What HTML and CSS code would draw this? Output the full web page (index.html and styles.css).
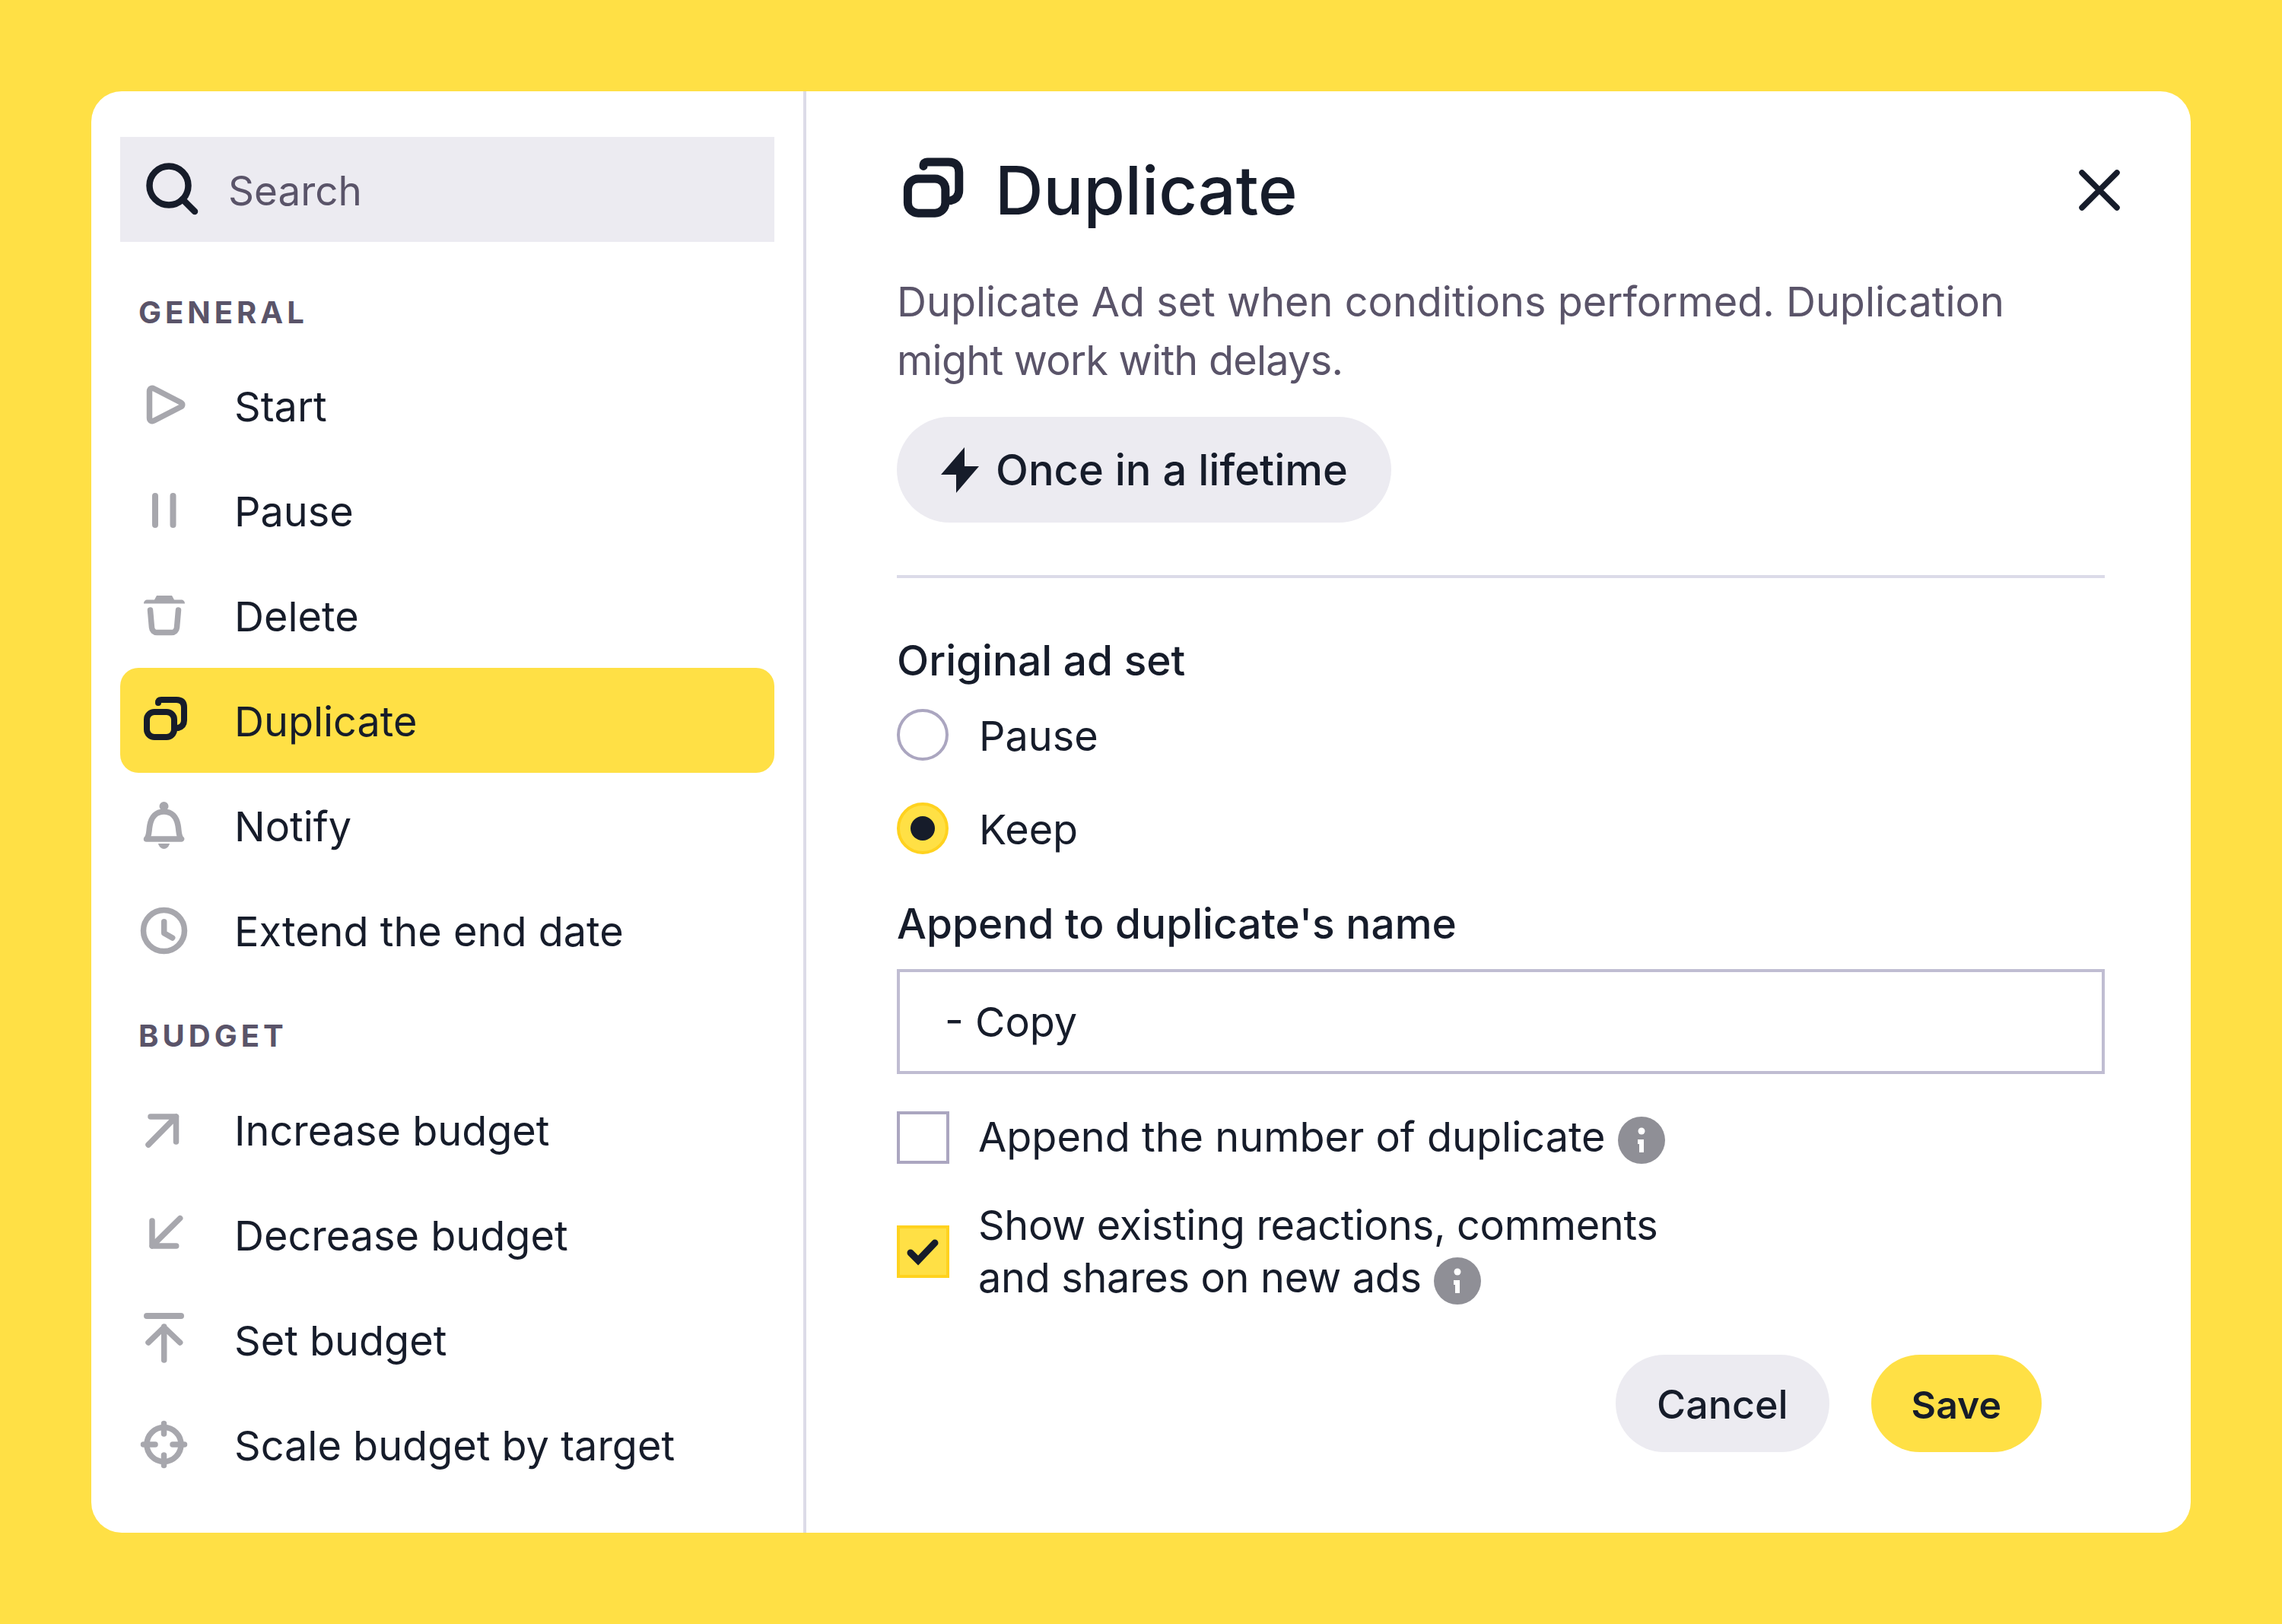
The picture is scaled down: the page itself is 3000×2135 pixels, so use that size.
FILE: index.html
```html
<!DOCTYPE html>
<html lang="en">

<head>
    <meta charset="UTF-8">
    <title>Duplicate</title>
    <link rel="stylesheet" href="styles.css">
</head>

<body>
<div class="card">
    <div class="side">
        <div class="search">
            <svg class="ico-search" viewBox="0 0 80 80"><circle cx="38" cy="35" r="25.5"/><path d="M56 53L72 69"/></svg>
            <span class="txt">Search</span>
        </div>

        <div class="group-title">GENERAL</div>
        <div class="row">
            <svg class="ico" viewBox="0 0 64 64"><path d="M12.5 13.5c0-3.5 3-5 6-3.5l35 18c3 1.5 3 4.5 0 6l-35 18c-3 1.5-6 0-6-3.5z"/></svg>
            <span class="txt">Start</span>
        </div>
        <div class="row">
            <svg class="ico" viewBox="0 0 64 64"><path class="wide" d="M20 13V51M43.5 13V51"/></svg>
            <span class="txt">Pause</span>
        </div>
        <div class="row">
            <svg class="ico" viewBox="0 0 64 64"><path class="solid" d="M5 16.5c0-3 2-5 5-5h9l3-5.5h20l3 5.5h9c3 0 5 2 5 5z"/><path d="M13.5 25l2 23c.4 4 3 6.5 7 6.5h19c4 0 6.6-2.5 7-6.5l2-23"/></svg>
            <span class="txt">Delete</span>
        </div>
        <div class="row active">
            <svg class="ico" viewBox="0 0 64 64"><rect class="wide" x="9" y="21" width="36" height="33" rx="10"/><path class="wide" d="M24 9q0-4 4-4h20q10 0 10 10v17q0 8-8 10"/></svg>
            <span class="txt">Duplicate</span>
        </div>
        <div class="row">
            <svg class="ico" viewBox="0 0 64 64"><circle class="solid" cx="31.5" cy="7" r="6"/><path d="M8.500 50c4-4 3-10 4.500-18c2-11 8-18 18.500-18s16.500 7 18.500 18c1.500 8 .5 14 4.500 18z"/><path class="solid" d="M24 56h15c-1 4-4 7-7.500 7s-6.500-3-7.500-7z"/></svg>
            <span class="txt">Notify</span>
        </div>
        <div class="row">
            <svg class="ico" viewBox="0 0 64 64"><circle cx="31.5" cy="32.5" r="27"/><path d="M31.700 20.700V35.700L42.700 42"/></svg>
            <span class="txt">Extend the end date</span>
        </div>

        <div class="group-title second">BUDGET</div>
        <div class="row">
            <svg class="ico" viewBox="0 0 64 64"><path d="M11 52L47.500 15M14 15H47.500V48"/></svg>
            <span class="txt">Increase budget</span>
        </div>
        <div class="row">
            <svg class="ico" viewBox="0 0 64 64"><path d="M52.700 10.700L16 47M16 14V47H47.700"/></svg>
            <span class="txt">Decrease budget</span>
        </div>
        <div class="row">
            <svg class="ico" viewBox="0 0 64 64"><path class="wide" d="M9 1H54"/><path d="M31.700 59V15M11 36L31.700 16L52.700 36"/></svg>
            <span class="txt">Set budget</span>
        </div>
        <div class="row">
            <svg class="ico" viewBox="0 0 64 64"><circle cx="31.500" cy="32" r="22.500"/><path d="M4.500 32H20M43 32H58.500M31.500 4.500V18M31.500 46V59.500"/></svg>
            <span class="txt">Scale budget by target</span>
        </div>
    </div>

    <div class="main">
        <div class="head">
            <svg class="ico-title" viewBox="0 0 64 64"><rect x="9" y="21" width="36" height="33" rx="10"/><path d="M24 9q0-4 4-4h20q10 0 10 10v17q0 8-8 10"/></svg>
            <h1>Duplicate</h1>
            <svg class="ico-close" viewBox="0 0 54 54"><path d="M4 4L50 50M50 4L4 50"/></svg>
        </div>
        <p class="desc">Duplicate Ad set when conditions performed. Duplication<br><span class="tight">might work with delays.</span></p>
        <div class="pill">
            <svg class="ico-bolt" viewBox="0 0 50 60"><path d="M31 0L0 36H20V60L50 25H31z"/></svg>
            Once in a lifetime
        </div>
        <div class="line"></div>

        <div class="label first">Original ad set</div>
        <div class="choice radio-top"><span class="radio"></span><span class="txt">Pause</span></div>
        <div class="choice radio-next"><span class="radio on"><span class="dot"></span></span><span class="txt">Keep</span></div>

        <div class="label append">Append to duplicate's name</div>
        <div class="input">- Copy</div>

        <div class="choice box-top">
            <span class="box"></span>
            <span>Append the number of duplicate<svg class="ico-info" viewBox="0 0 62 62"><circle class="disc" cx="31" cy="31" r="31"/><circle class="spot" cx="31" cy="19" r="4.500"/><path d="M26 33h5v14"/></svg></span>
        </div>
        <div class="choice box-next">
            <span class="box on"><svg viewBox="0 0 61 61"><path d="M14 32L24 42L46 19"/></svg></span>
            <span class="long">Show existing reactions, comments<br>and shares on new ads<svg class="ico-info" viewBox="0 0 62 62"><circle class="disc" cx="31" cy="31" r="31"/><circle class="spot" cx="31" cy="19" r="4.500"/><path d="M26 33h5v14"/></svg></span>
        </div>

        <div class="actions">
            <div class="btn cancel">Cancel</div>
            <div class="btn save">Save</div>
        </div>
    </div>
</div>
</body>

</html>
```

FILE: styles.css
```css
* {
  box-sizing: border-box;
}
body {
  margin: 0;
  padding: 120px;
  height: 2135px;
  background: #ffe045;
  font-family: "Inter", "Liberation Sans", sans-serif;
  font-size: 54px;
  color: #161c2a;
}
.card {
  display: flex;
  height: 1895px;
  background: #fff;
  border-radius: 40px;
  overflow: hidden;
}
.txt {
  padding-top: 4px;
  line-height: 60px;
}

/* left column */
.side {
  width: 940px;
  padding: 60px 38px 0;
  border-right: 4px solid #dcdbe8;
  flex-shrink: 0;
}
.search {
  display: flex;
  align-items: center;
  gap: 36px;
  height: 138px;
  padding-left: 26px;
  background: #ecebf1;
  font-size: 53px;
  color: #5a5469;
}
.ico-search {
  width: 80px;
  height: 80px;
  fill: none;
  stroke: #161c2a;
  stroke-width: 8.5;
  stroke-linecap: round;
}
.group-title {
  height: 46px;
  margin: 70px 0 30px 24px;
  line-height: 46px;
  font-size: 40px;
  font-weight: 700;
  letter-spacing: 5px;
  color: #5a5469;
}
.group-title.second {
  margin-top: 47px;
  margin-bottom: 31px;
}
.row {
  display: flex;
  align-items: center;
  gap: 60px;
  height: 138px;
  padding-left: 26px;
  border-radius: 24px;
}
.row.active {
  background: #ffe045;
}
.ico {
  width: 64px;
  height: 64px;
  flex-shrink: 0;
  overflow: visible;
  fill: none;
  stroke: #a7a7ad;
  stroke-width: 7.5;
  stroke-linecap: round;
  stroke-linejoin: round;
}
.ico .wide {
  stroke-width: 8;
}
.ico .solid {
  fill: #a7a7ad;
  stroke: none;
}
.active .ico {
  stroke: #161c2a;
}

/* right column */
.main {
  flex: 1;
  padding: 86px 113px 0 119px;
}
.head {
  display: flex;
  align-items: center;
  height: 88px;
}
.head h1 {
  flex: 1;
  margin: 0 0 0 39px;
  font-size: 88px;
  font-weight: 500;
}
.ico-title {
  width: 88px;
  height: 88px;
  margin-left: 2px;
  fill: none;
  stroke: #161c2a;
  stroke-width: 8;
  stroke-linecap: round;
}
.ico-close {
  width: 54px;
  height: 54px;
  margin-right: -20px;
  fill: none;
  stroke: #161c2a;
  stroke-width: 7.5;
  stroke-linecap: round;
}
.desc {
  margin: 64px 0 0;
  line-height: 77px;
  color: #5a5469;
}
.tight {
  letter-spacing: -0.75px;
}
.pill {
  display: inline-flex;
  align-items: center;
  gap: 22px;
  height: 139px;
  margin-top: 36px;
  padding: 0 57px 0 58px;
  border-radius: 70px;
  background: #ecebf1;
  font-size: 56px;
  font-weight: 500;
}
.ico-bolt {
  width: 50px;
  height: 60px;
  fill: #161c2a;
}
.line {
  height: 4px;
  margin-top: 69px;
  background: #dcdbe8;
}
.label {
  height: 60px;
  line-height: 60px;
  font-size: 55px;
  font-weight: 500;
}
.label.first {
  margin-top: 78px;
}
.label.append {
  margin-top: 61px;
}
.choice {
  display: flex;
  align-items: center;
  gap: 40px;
}
.radio-top {
  margin-top: 34px;
}
.radio-next {
  margin-top: 55px;
}
.radio {
  display: flex;
  align-items: center;
  justify-content: center;
  width: 68px;
  height: 68px;
  border: 4px solid #aba6c0;
  border-radius: 50%;
}
.radio.on {
  background: #ffe045;
  border-color: #ffd21f;
}
.dot {
  width: 32px;
  height: 32px;
  border-radius: 50%;
  background: #161c2a;
}
.input {
  display: flex;
  align-items: center;
  height: 138px;
  margin-top: 30px;
  padding-left: 59px;
  border: 4px solid #c0bdd2;
}
.box-top,
.box-next {
  gap: 38px;
  margin-top: 48px;
  line-height: 69px;
}
.box-next {
  margin-top: 46px;
}
.long {
  letter-spacing: -0.3px;
}
.box {
  width: 69px;
  height: 69px;
  flex-shrink: 0;
  border: 4px solid #aba6c0;
}
.box.on {
  background: #ffe045;
  border-color: #ffd21f;
}
.box svg {
  display: block;
  fill: none;
  stroke: #161c2a;
  stroke-width: 9;
  stroke-linecap: round;
}
.ico-info {
  width: 62px;
  height: 62px;
  margin-left: 16px;
  vertical-align: -16px;
  fill: none;
  stroke: #fff;
  stroke-width: 6;
}
.ico-info .disc {
  fill: #8f8f96;
  stroke: none;
}
.ico-info .spot {
  fill: #fff;
  stroke: none;
}
.actions {
  display: flex;
  justify-content: flex-end;
  gap: 55px;
  margin-top: 66px;
  padding-right: 83px;
}
.btn {
  height: 128px;
  padding: 0 54px;
  border-radius: 64px;
  font-size: 52px;
  line-height: 132px;
  font-weight: 500;
}
.cancel {
  background: #ecebf1;
}
.save {
  padding: 0 53px;
  background: #ffe045;
  font-size: 50px;
  font-weight: 600;
}
```
